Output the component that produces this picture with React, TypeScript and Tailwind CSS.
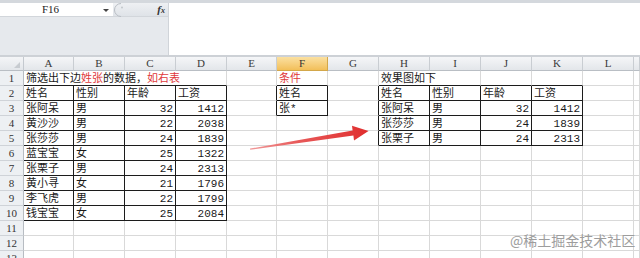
import React from "react";

type Cell = { t: string; right?: boolean; red?: boolean; span?: number };

const COLS = ["A", "B", "C", "D", "E", "F", "G", "H", "I", "J", "K", "L", ""];

const data: Record<string, Cell> = {};
const put = (ref: string, c: Cell) => (data[ref] = c);

const table1: [string, string, number, number][] = [
  ["张阿呆", "男", 32, 1412],
  ["黄沙沙", "男", 22, 2038],
  ["张莎莎", "男", 24, 1839],
  ["蓝宝宝", "女", 25, 1322],
  ["张栗子", "男", 24, 2313],
  ["黄小寻", "女", 21, 1796],
  ["李飞虎", "男", 22, 1799],
  ["钱宝宝", "女", 25, 2084],
];
const table2: [string, string, number, number][] = [
  ["张阿呆", "男", 32, 1412],
  ["张莎莎", "男", 24, 1839],
  ["张栗子", "男", 24, 2313],
];

put("A1", { t: "", span: 4 });
put("A2", { t: "姓名" });
put("B2", { t: "性别" });
put("C2", { t: "年龄" });
put("D2", { t: "工资" });
table1.forEach((r, i) => {
  const n = i + 3;
  put("A" + n, { t: r[0] });
  put("B" + n, { t: r[1] });
  put("C" + n, { t: String(r[2]), right: true });
  put("D" + n, { t: String(r[3]), right: true });
});
put("F1", { t: "条件", red: true });
put("F2", { t: "姓名" });
put("F3", { t: "张*" });
put("H1", { t: "效果图如下", span: 2 });
put("H2", { t: "姓名" });
put("I2", { t: "性别" });
put("J2", { t: "年龄" });
put("K2", { t: "工资" });
table2.forEach((r, i) => {
  const n = i + 3;
  put("H" + n, { t: r[0] });
  put("I" + n, { t: r[1] });
  put("J" + n, { t: String(r[2]), right: true });
  put("K" + n, { t: String(r[3]), right: true });
});

const tables = [
  { c0: 0, c1: 3, r0: 2, r1: 10 },
  { c0: 5, c1: 5, r0: 2, r1: 3 },
  { c0: 7, c1: 10, r0: 2, r1: 5 },
];
const inTable = (c: number, r: number) =>
  tables.some((t) => c >= t.c0 && c <= t.c1 && r >= t.r0 && r <= t.r1);

const font = {
  fontFamily: '"Liberation Mono", "Noto Sans CJK SC", monospace',
};

function Row1A() {
  return (
    <span className="text-[#1a1a1a]">
      筛选出下边<span className="text-[#e0393b]">姓张</span>的数据，
      <span className="text-[#e0393b]">如右表</span>
    </span>
  );
}

export default function App() {
  const cells: React.ReactNode[] = [];

  cells.push(
    <div
      key="corner"
      className="relative border-r border-b border-r-[#c4c9cf] border-b-[#b9bec4] bg-gradient-to-b from-[#f4f5f7] to-[#e3e6ea]"
    >
      <div className="absolute right-[3px] bottom-[2px] w-0 h-0 border-l-[6px] border-t-[6px] border-l-transparent border-t-transparent border-r-0 border-b-[6px] border-b-[#c7cbd0]" />
    </div>
  );
  COLS.forEach((c) => {
    const sel = c === "F";
    cells.push(
      <div
        key={"h" + c}
        className={
          sel
            ? "flex items-center justify-center border-r border-b border-r-[#d3a74a] border-b-[#d3a74a] bg-gradient-to-b from-[#fbe0a0] to-[#f2bf58] text-[11px] text-[#333]"
            : "flex items-center justify-center border-r border-b border-r-[#c9cdd2] border-b-[#b9bec4] bg-gradient-to-b from-[#f5f6f8] to-[#e3e6ea] text-[11px] text-[#3a3a3a]"
        }
        style={{ fontFamily: '"Liberation Serif", serif' }}
      >
        {c}
      </div>
    );
  });

  for (let r = 1; r <= 13; r++) {
    cells.push(
      <div
        key={"r" + r}
        className="flex items-center justify-center border-r border-b border-r-[#b7bcc2] border-b-[#cfd3d8] bg-[#edf0f3] text-[11px] text-[#333]"
        style={{ fontFamily: '"Liberation Serif", serif' }}
      >
        {r}
      </div>
    );
    for (let c = 0; c < COLS.length; c++) {
      const ref = COLS[c] + r;
      const cell = data[ref];
      const span = cell?.span ?? 1;
      const lastC = c + span - 1;
      const blackR = inTable(lastC, r) || inTable(lastC + 1, r);
      const blackB = inTable(c, r) || inTable(c, r + 1);
      const rightCls = blackR ? "border-r-[#1c1c1c]" : "border-r-[#d9d9d9]";
      const bottomCls = blackB ? "border-b-[#1c1c1c]" : "border-b-[#d9d9d9]";
      const spanCls = span === 4 ? "col-span-4" : span === 2 ? "col-span-2" : "";
      let content: React.ReactNode = null;
      if (ref === "A1") content = <Row1A />;
      else if (cell) content = cell.t;
      cells.push(
        <div
          key={ref}
          className={`flex items-center whitespace-nowrap overflow-visible border-r border-b text-[11px] leading-[14px] pt-[1px] ${rightCls} ${bottomCls} ${spanCls} ${
            cell?.right ? "justify-end pr-[2px]" : "justify-start pl-[2px]"
          } ${cell?.red ? "text-[#e0393b]" : "text-[#1a1a1a]"}`}
          style={font}
        >
          {content}
        </div>
      );
      c = lastC;
    }
  }

  return (
    <div className="relative w-[640px] h-[258px] overflow-hidden bg-white">
      <div className="h-[3px] bg-[#d4d8dd]" />
      <div className="flex h-[52px]">
        <div className="flex w-[168px] flex-col bg-[#e6e9ed]">
          <div className="flex h-[14px] border-b border-b-[#d2d6db]">
            <div
              className="relative flex w-[113px] items-center justify-center pr-[12px] bg-white text-[11px] text-[#222]"
              style={{ fontFamily: '"Liberation Serif", serif' }}
            >
              F16
              <div className="absolute right-[4px] top-[6px] w-0 h-0 border-x-[3px] border-t-[3px] border-x-transparent border-t-[#444]" />
            </div>
            <div className="relative flex flex-1 items-center bg-gradient-to-b from-[#eef0f3] to-[#dfe3e8]">
              <svg width="12" height="14" viewBox="0 0 12 14" className="ml-[1px]">
                <path d="M7 0.5 A6.5 6.5 0 0 0 7 13.5" fill="none" stroke="#b8bdc3" strokeWidth="1" />
                <circle cx="8" cy="4.5" r="1" fill="#c3c7cc" />
              </svg>
              <span
                className="ml-auto mr-[3px] text-[11px] font-bold italic text-[#333]"
                style={{ fontFamily: '"Liberation Serif", serif' }}
              >
                f<span className="text-[8px]">x</span>
              </span>
            </div>
          </div>
          <div className="flex-1" />
        </div>
        <div className="flex-1 bg-white border-l border-l-[#d0d4d9]" />
      </div>
      <div className="h-[2px] bg-[#cdd1d6]" />

      <div className="grid grid-cols-[24px_50px_51px_51px_51px_50px_51px_51px_51px_51px_51px_51px_51px_6px] grid-rows-[14px_repeat(13,15px)]">
        {cells}
      </div>

      <svg
        className="pointer-events-none absolute left-0 top-0"
        width="640"
        height="258"
        viewBox="0 0 640 258"
      >
        <defs>
          <linearGradient id="ag" x1="250" y1="149" x2="368" y2="131" gradientUnits="userSpaceOnUse">
            <stop offset="0" stopColor="#f19a9a" />
            <stop offset="0.4" stopColor="#e85a5a" />
            <stop offset="1" stopColor="#e02e2e" />
          </linearGradient>
        </defs>
        <polygon
          points="250,148.6 352.6,130.6 352,125.8 368.5,131 354,140.4 353.4,135.6 250.2,149.8"
          fill="url(#ag)"
        />
      </svg>

      <div
        className="pointer-events-none absolute left-[510px] top-[231px] text-[14px] leading-[18px] text-[#9d9d9d]"
        style={{ fontFamily: '"Noto Sans CJK SC", sans-serif' }}
      >
        @稀土掘金技术社区
      </div>
    </div>
  );
}
